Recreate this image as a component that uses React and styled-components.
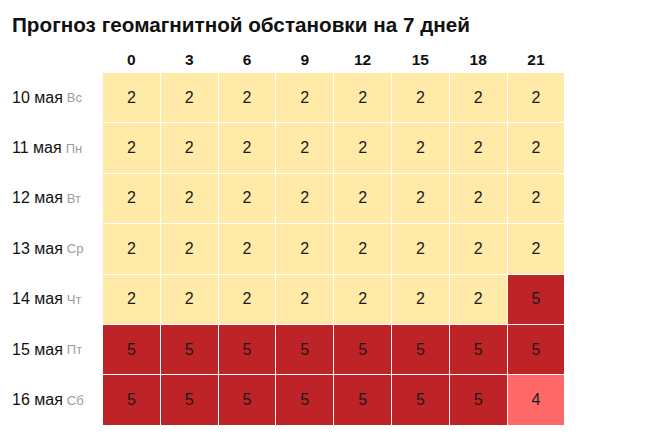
import React from 'react';
import styled, { createGlobalStyle } from 'styled-components';

const GlobalStyle = createGlobalStyle`
    body {
        margin: 0;
        background: #fff;
        font-family: 'Liberation Sans', Arial, sans-serif;
        color: #111;
    }
`;

const Page = styled.div`
    padding: 13px 12px 0;
`;

const Title = styled.h2`
    margin: 0 0 10px;
    font-size: 20.7px;
    font-weight: bold;
    line-height: 24px;
    white-space: nowrap;
`;

const Grid = styled.div`
    display: grid;
    grid-template-columns: 90px repeat(8, 56.8px);
    grid-template-rows: 25px;
    grid-auto-rows: 49.4px;
    column-gap: 1px;
    row-gap: 1px;
    width: max-content;
`;

const HeadCell = styled.div`
    display: flex;
    align-items: center;
    justify-content: center;
    font-size: 15.5px;
    font-weight: bold;
`;

const DayLabel = styled.div`
    display: flex;
    align-items: center;
    font-size: 16px;
    white-space: nowrap;
`;

const Weekday = styled.span`
    margin-left: 4px;
    font-size: 13px;
    color: #9c9c9c;
`;

const levelColors = {
    2: '#ffeaa7',
    4: '#ff6868',
    5: '#be2327',
};

const Cell = styled.div`
    display: flex;
    align-items: center;
    justify-content: center;
    font-size: 16px;
    color: #1a1a1a;
    background: ${({ $level }) => levelColors[$level]};
`;

const hours = [0, 3, 6, 9, 12, 15, 18, 21];

const days = [
    { date: '10 мая', wd: 'Вс', kp: [2, 2, 2, 2, 2, 2, 2, 2] },
    { date: '11 мая', wd: 'Пн', kp: [2, 2, 2, 2, 2, 2, 2, 2] },
    { date: '12 мая', wd: 'Вт', kp: [2, 2, 2, 2, 2, 2, 2, 2] },
    { date: '13 мая', wd: 'Ср', kp: [2, 2, 2, 2, 2, 2, 2, 2] },
    { date: '14 мая', wd: 'Чт', kp: [2, 2, 2, 2, 2, 2, 2, 5] },
    { date: '15 мая', wd: 'Пт', kp: [5, 5, 5, 5, 5, 5, 5, 5] },
    { date: '16 мая', wd: 'Сб', kp: [5, 5, 5, 5, 5, 5, 5, 4] },
];

export default function App() {
    return (
        <>
            <GlobalStyle />
            <Page>
                <Title>Прогноз геомагнитной обстановки на 7 дней</Title>
                <Grid>
                    <div />
                    {hours.map(h => (
                        <HeadCell key={h}>{h}</HeadCell>
                    ))}
                    {days.map(day => (
                        <React.Fragment key={day.date}>
                            <DayLabel>
                                {day.date}
                                <Weekday>{day.wd}</Weekday>
                            </DayLabel>
                            {day.kp.map((v, i) => (
                                <Cell key={i} $level={v}>
                                    {v}
                                </Cell>
                            ))}
                        </React.Fragment>
                    ))}
                </Grid>
            </Page>
        </>
    );
}
